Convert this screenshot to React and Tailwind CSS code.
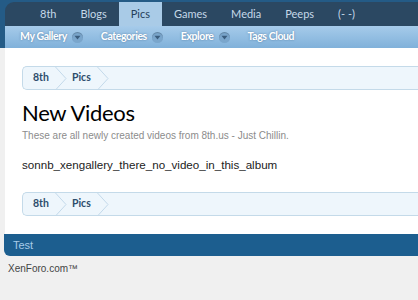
import React from 'react';

const tabs = ['8th', 'Blogs', 'Pics', 'Games', 'Media', 'Peeps', '(- -)'];
const subLinks = [
  { label: 'My Gallery', menu: true },
  { label: 'Categories', menu: true },
  { label: 'Explore', menu: true },
  { label: 'Tags Cloud', menu: false },
];

// small round drop-down marker next to the sub nav links
const MenuArrow = () => (
  <span className="ml-[5px] inline-flex h-[11px] w-[11px] items-center justify-center rounded-full bg-[#7aa6cc] shadow-[inset_0_1px_1px_rgba(0,0,0,0.2)]">
    <svg width="7" height="5" viewBox="0 0 7 5">
      <path d="M0.5 0.8 L6.5 0.8 L3.5 4.4 Z" fill="#3a5d7e" />
    </svg>
  </span>
);

const Chevron = () => (
  <svg width="12" height="23" viewBox="0 0 12 23" className="shrink-0">
    <path d="M0.5 0 L11 11.5 L0.5 23" fill="none" stroke="#c3d9ea" strokeWidth="1" />
  </svg>
);

const Breadcrumb = () => (
  <div
    className="flex h-[24px] items-stretch rounded-l-[5px] border border-r-0 border-[#c4dae9] bg-[#eef6fc] text-[10.5px] text-[#2d4d6c]"
    style={{ fontFamily: 'Lato, sans-serif' }}
  >
    <span className="flex items-center pl-[10px] pr-[6px] font-bold">8th</span>
    <Chevron />
    <span className="flex items-center pl-[5px] pr-[6px] font-bold">Pics</span>
    <Chevron />
  </div>
);

export default function App() {
  return (
    <div
      className="min-h-[300px] w-[418px] overflow-hidden bg-[#f0f0f0]"
      style={{ fontFamily: '"Liberation Sans", Arial, sans-serif' }}
    >
      {/* header */}
      <div className="bg-[#245b86] pl-[5px] pt-[2px]" style={{ fontFamily: 'Lato, sans-serif' }}>
        <div className="flex h-[24px] items-stretch rounded-tl-[9px] bg-[#2b4862] pl-[23px] text-[11px]">
          {tabs.map((t) => (
            <div
              key={t}
              className={
                t === 'Pics'
                  ? 'flex items-center bg-[#a9cbe7] px-[12px] text-[#24405a]'
                  : 'flex items-center px-[12px] text-[#c6d9e9]'
              }
            >
              {t}
            </div>
          ))}
        </div>
        <div className="flex h-[22px] items-center gap-[18px] bg-gradient-to-b from-[#a6cbea] to-[#80b1da] pl-[15px] text-[10.5px] font-bold tracking-[-0.4px] text-white [text-shadow:0_0_2px_rgba(40,80,120,0.6)]">
          {subLinks.map((l) => (
            <span key={l.label} className="flex items-center">
              {l.label}
              {l.menu && <MenuArrow />}
            </span>
          ))}
        </div>
      </div>

      {/* content */}
      <div className="ml-[5px] bg-white pb-[18px] pl-[17px] pt-[18px]">
        <Breadcrumb />
        <h1
          className="mt-[8px] text-[22px] leading-[30px] tracking-[-0.3px] text-black"
          style={{ fontFamily: 'Lato, sans-serif' }}
        >
          New Videos
        </h1>
        <p className="mt-[1px] text-[10px] leading-[14px] text-[#8c8c8c]">
          These are all newly created videos from 8th.us - Just Chillin.
        </p>
        <p className="mt-[14px] text-[11.6px] leading-[16px] text-[#222]">
          sonnb_xengallery_there_no_video_in_this_album
        </p>
        <div className="mt-[19px]">
          <Breadcrumb />
        </div>
      </div>

      {/* footer */}
      <div className="ml-[4px] flex h-[22px] items-center rounded-bl-[6px] bg-[#1c5e8f] pl-[9px] text-[11px] text-[#a7cbe8]">
        Test
      </div>
      <div className="pl-[8px] pt-[5px] text-[10px] text-[#444]">XenForo.com™</div>
    </div>
  );
}
